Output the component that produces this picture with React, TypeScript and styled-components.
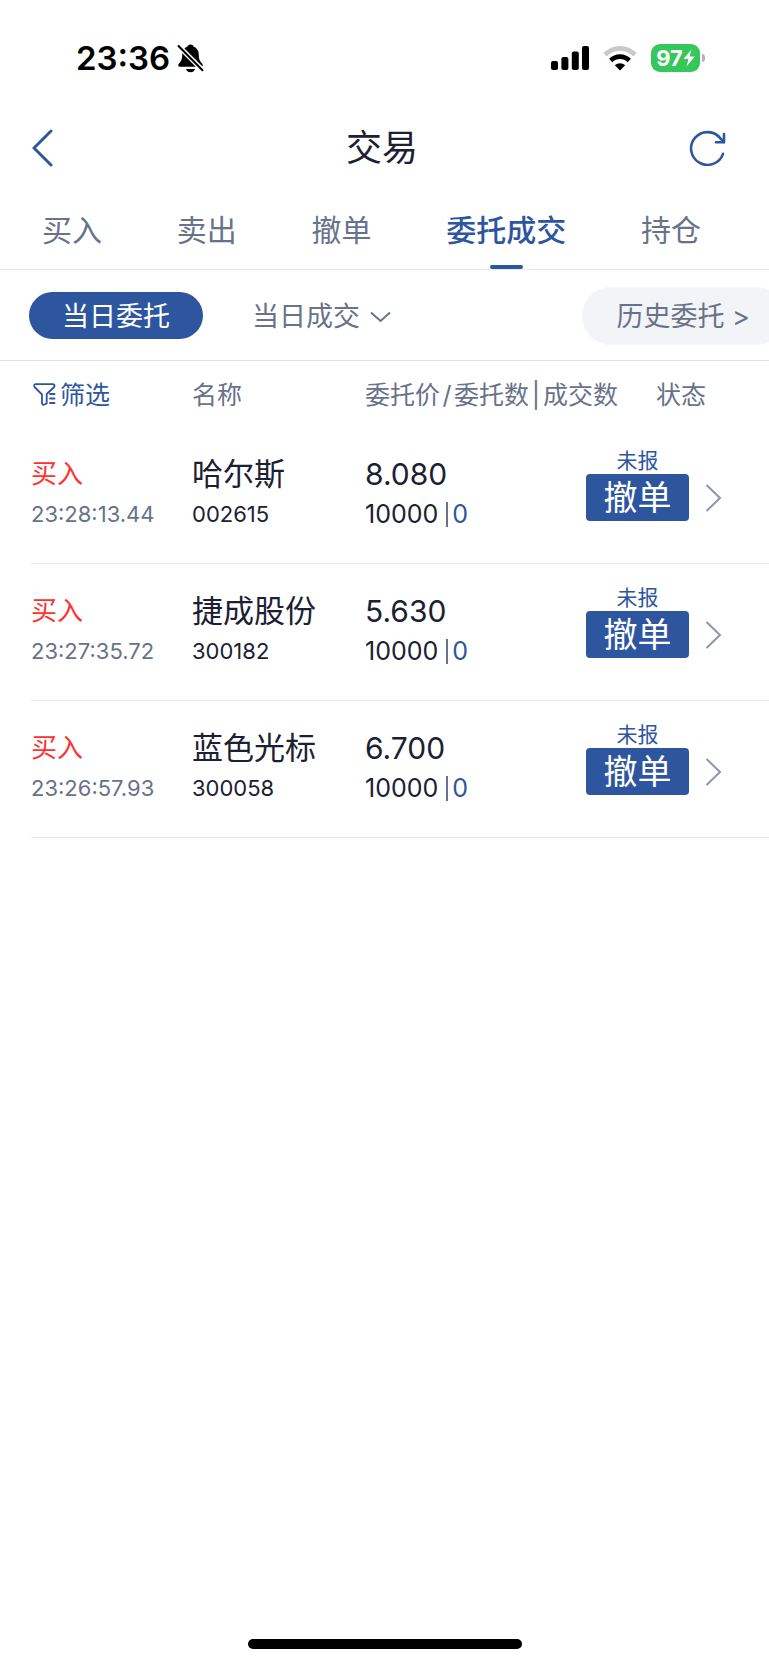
import React from 'react';
import styled, { createGlobalStyle } from 'styled-components';

const color = {
  blue: '#2e569f',
  ink: '#1b2132',
  slate: '#68728a',
  red: '#ff3030',
  line: '#e9eaee',
  pale: '#f3f4f7',
};

const GlobalStyle = createGlobalStyle`
  * { box-sizing: border-box; }
  body {
    margin: 0;
    background: #fff;
    color: ${color.ink};
    font-family: Inter, 'Noto Sans CJK SC', sans-serif;
  }
  button {
    margin: 0;
    padding: 0;
    border: 0;
    background: none;
    color: inherit;
    font: inherit;
    cursor: pointer;
  }
  svg { display: block; flex: none; }
`;

const Page = styled.div`
  display: flex;
  flex-direction: column;
  min-height: 100vh;
  overflow: hidden;
`;

const StatusBar = styled.div`
  display: flex;
  align-items: center;
  justify-content: space-between;
  height: 114px;
  padding: 2px 64px 0 76px;
  color: #000;
`;

const StatusGroup = styled.div<{ $gap: number }>`
  display: flex;
  align-items: center;
  gap: ${(p) => p.$gap}px;
`;

const Clock = styled.time`
  font-size: 33px;
  line-height: 40px;
  font-weight: 600;
`;

const Battery = styled.div`
  display: flex;
  align-items: center;
  gap: 2px;
`;

const BatteryBody = styled.div`
  display: flex;
  align-items: center;
  justify-content: center;
  width: 49px;
  height: 28px;
  border-radius: 9px;
  background: #35c759;
  color: #fff;
  font-size: 22px;
  line-height: 28px;
  font-weight: 700;
`;

const BatteryTip = styled.div`
  width: 3px;
  height: 8px;
  border-radius: 0 3px 3px 0;
  background: #b5b5b8;
`;

const TitleBar = styled.header`
  display: grid;
  grid-template-columns: 1fr auto 1fr;
  align-items: center;
  height: 68px;
  padding: 0 43px 0 38px;
`;

const Title = styled.h1`
  margin: 0;
  font-size: 36px;
  line-height: 48px;
  font-weight: 400;
`;

const IconButton = styled.button<{ $end?: boolean }>`
  justify-self: ${(p) => (p.$end ? 'end' : 'start')};
  margin-left: ${(p) => (p.$end ? 0 : -6)}px;
  color: ${color.blue};
`;

const Tabs = styled.nav`
  display: flex;
  justify-content: space-between;
  height: 88px;
  padding: 0 68px 0 42px;
  border-bottom: 1px solid ${color.line};
`;

const Tab = styled.button<{ $active?: boolean }>`
  display: flex;
  flex-direction: column;
  align-items: center;
  justify-content: space-between;
  padding-top: 26px;
  color: ${(p) => (p.$active ? color.blue : color.slate)};
  font-size: 30px;
  line-height: 44px;
  font-weight: ${(p) => (p.$active ? 500 : 400)};
  white-space: nowrap;

  &::after {
    content: '';
    width: 33px;
    height: 4px;
    border-radius: 2px;
    background: ${(p) => (p.$active ? color.blue : 'transparent')};
  }
`;

const FilterBar = styled.div`
  display: flex;
  align-items: center;
  height: 91px;
  padding: 1px 0 0 29px;
  border-bottom: 1px solid #dddfe6;
  color: ${color.slate};
  font-size: 27px;
  line-height: 40px;
  white-space: nowrap;
`;

const ActivePill = styled.button`
  height: 47px;
  padding: 2px 33px 0;
  border-radius: 24px;
  background: ${color.blue};
  color: #fff;
`;

const DropButton = styled.button`
  display: flex;
  align-items: center;
  gap: 10px;
  margin-left: 49px;
  padding-top: 2px;
`;

const HistoryPill = styled.button`
  height: 58px;
  margin-left: auto;
  margin-right: -16px;
  padding: 2px 35px 0;
  border-radius: 29px;
  background: ${color.pale};
`;

const TableArea = styled.main`
  flex: 1;
  padding-left: 31px;
`;

const Table = styled.table`
  width: 100%;
  table-layout: fixed;
  border-collapse: separate;
  border-spacing: 0;
`;

const HeadCell = styled.th<{ $width?: number; $indent?: number }>`
  width: ${(p) => (p.$width ? `${p.$width}px` : 'auto')};
  height: 66px;
  padding: 1px 0 0 ${(p) => p.$indent ?? 0}px;
  color: ${color.slate};
  font-size: 25px;
  line-height: 36px;
  font-weight: 400;
  text-align: left;
  white-space: nowrap;
`;

const FilterButton = styled.button`
  display: flex;
  align-items: center;
  gap: 4px;
  padding-left: 2px;
  color: ${color.blue};
`;

const Separator = styled.span`
  display: inline-block;
  width: 14px;
  text-align: center;
`;

const Cell = styled.td`
  padding: 26px 0 30px;
  border-bottom: 1px solid ${color.line};
  vertical-align: top;
  white-space: nowrap;
`;

const ActionCell = styled(Cell)`
  padding: 21px 0 0;
`;

const Line = styled.div<{ $size: number; $tall?: boolean; $color?: string }>`
  height: ${(p) => (p.$tall ? 42 : 38)}px;
  font-size: ${(p) => p.$size}px;
  line-height: ${(p) => (p.$tall ? 42 : 38)}px;
  color: ${(p) => p.$color ?? color.ink};
`;

const Quantity = styled(Line)`
  display: flex;
  align-items: center;
`;

const Filled = styled.span`
  margin-left: 8px;
  padding-left: 4px;
  border-left: 2px solid ${color.slate};
  color: ${color.blue};
  line-height: 25px;
`;

const Actions = styled.div`
  display: flex;
  align-items: flex-end;
  gap: 16px;
`;

const Stack = styled.div`
  display: flex;
  flex-direction: column;
  width: 103px;
  text-align: center;
`;

const State = styled.span`
  color: ${color.blue};
  font-size: 21px;
  line-height: 26px;
`;

const CancelButton = styled.button`
  height: 47px;
  border-radius: 4px;
  background: ${color.blue};
  color: #fff;
  font-size: 34px;
  line-height: 47px;
`;

const DetailButton = styled.button`
  display: flex;
  align-items: center;
  height: 47px;
`;

const HomeIndicator = styled.div`
  width: 36%;
  max-width: 274px;
  height: 10px;
  margin: 0 auto 16px;
  border-radius: 5px;
  background: #000;
`;

const BellOff = () => (
  <svg width="27" height="29" viewBox="0 0 27 29" aria-hidden="true">
    <path
      d="M13.500 0.500c-1.800 0-2.900 1-3.200 2.200C6.600 4 5.300 7 5.200 11c0 4-.8 6-3.200 8.500-1.200 1.300-1 3.300 1 3.300h21c2 0 2.200-2 1-3.300-2.400-2.500-3.200-4.500-3.200-8.500-.1-4-1.400-7-5.100-8.300C16.400 1.500 15.300.5 13.500.5z"
      fill="#000"
    />
    <path d="M9 25h9c-.5 2-2.300 3.300-4.500 3.300S9.500 27 9 25z" fill="#000" />
    <path d="M0 0.500L27 27.500" stroke="#fff" strokeWidth="5" />
    <path d="M1.500 2L25.500 26.200" stroke="#000" strokeWidth="2" strokeLinecap="round" />
  </svg>
);

const Signal = () => (
  <svg width="38" height="25" viewBox="0 0 38 25" aria-hidden="true">
    <rect x="0" y="15" width="7" height="9" rx="2" />
    <rect x="10.400" y="11" width="7" height="13" rx="2" />
    <rect x="20.800" y="5.500" width="7" height="18.500" rx="2" />
    <rect x="31" y="0" width="7" height="24" rx="2" />
  </svg>
);

const Wifi = () => (
  <svg width="34" height="25" viewBox="0 0 34 25" fill="none" aria-hidden="true">
    <path d="M2 8.800C10.500 0.300 23.500 0.300 32 8.800" stroke="#c9c9c9" strokeWidth="4.800" />
    <path d="M7.700 14.500C13 9.300 21 9.300 26.300 14.500" stroke="#000" strokeWidth="4.600" />
    <path d="M17 24.500L11.800 19.300C14.800 16.600 19.200 16.600 22.200 19.300z" fill="#000" />
  </svg>
);

const Bolt = () => (
  <svg width="12" height="18" viewBox="0 0 12 18" aria-hidden="true">
    <path d="M8.500 0.500L0.500 10h5L3.500 17.500 11.800 7.600H6.600z" fill="#fff" />
  </svg>
);

const BackIcon = () => (
  <svg width="21" height="38" viewBox="0 0 21 38" fill="none" aria-hidden="true">
    <path d="M19 2L2 19l17 17" stroke="currentColor" strokeWidth="3" strokeLinecap="round" strokeLinejoin="round" />
  </svg>
);

const RefreshIcon = () => (
  <svg width="37" height="36" viewBox="0 0 37 36" fill="none" stroke="currentColor" strokeWidth="2.600" aria-hidden="true">
    <path d="M34 23.800A16.400 16.400 0 1 1 31.500 8.500L34.800 12" strokeLinecap="round" />
    <path d="M35 4V12.200H27" strokeLinecap="round" strokeLinejoin="round" />
  </svg>
);

const DownIcon = () => (
  <svg width="21" height="12" viewBox="0 0 21 12" fill="none" aria-hidden="true">
    <path d="M1 1.500l9.500 8.500L20 1.500" stroke="currentColor" strokeWidth="2" />
  </svg>
);

const FunnelIcon = () => (
  <svg width="23" height="23" viewBox="0 0 23 23" fill="none" stroke="currentColor" strokeWidth="1.800" strokeLinejoin="round" strokeLinecap="round" aria-hidden="true">
    <path d="M13.500 20.500L11 21.700Q9.500 22 9 20.500V11.500L1.500 4Q0.500 1.500 2.500 1.200H20Q22.300 1.500 21.200 4L13.700 11V20.500" />
    <path d="M17 11h4.500M17 15.500h4.500M17 20h4.500" />
  </svg>
);

const RightIcon = () => (
  <svg width="17" height="28" viewBox="0 0 17 28" fill="none" aria-hidden="true">
    <path d="M1.500 1L15 14 1.500 27" stroke="#8d96a8" strokeWidth="2" />
  </svg>
);

const tabs = ['买入', '卖出', '撤单', '委托成交', '持仓'];

const orders = [
  { time: '23:28:13.44', name: '哈尔斯', code: '002615', price: '8.080', quantity: 10000, filled: 0 },
  { time: '23:27:35.72', name: '捷成股份', code: '300182', price: '5.630', quantity: 10000, filled: 0 },
  { time: '23:26:57.93', name: '蓝色光标', code: '300058', price: '6.700', quantity: 10000, filled: 0 },
];

export default function App() {
  return (
    <>
      <GlobalStyle />
      <Page>
        <StatusBar>
          <StatusGroup $gap={7}>
            <Clock>23:36</Clock>
            <BellOff />
          </StatusGroup>
          <StatusGroup $gap={14}>
            <Signal />
            <Wifi />
            <Battery>
              <BatteryBody>
                97
                <Bolt />
              </BatteryBody>
              <BatteryTip />
            </Battery>
          </StatusGroup>
        </StatusBar>

        <TitleBar>
          <IconButton aria-label="返回">
            <BackIcon />
          </IconButton>
          <Title>交易</Title>
          <IconButton $end aria-label="刷新">
            <RefreshIcon />
          </IconButton>
        </TitleBar>

        <Tabs>
          {tabs.map((label) => (
            <Tab key={label} $active={label === '委托成交'}>
              {label}
            </Tab>
          ))}
        </Tabs>

        <FilterBar>
          <ActivePill>当日委托</ActivePill>
          <DropButton>
            当日成交
            <DownIcon />
          </DropButton>
          <HistoryPill>历史委托 &gt;</HistoryPill>
        </FilterBar>

        <TableArea>
          <Table>
            <thead>
              <tr>
                <HeadCell $width={161}>
                  <FilterButton>
                    <FunnelIcon />
                    筛选
                  </FilterButton>
                </HeadCell>
                <HeadCell $width={173}>名称</HeadCell>
                <HeadCell>
                  委托价<Separator>/</Separator>委托数<Separator>|</Separator>成交数
                </HeadCell>
                <HeadCell $width={183} $indent={70}>状态</HeadCell>
              </tr>
            </thead>
            <tbody>
              {orders.map((order) => (
                <tr key={order.code}>
                  <Cell>
                    <Line $size={26} $tall $color={color.red}>买入</Line>
                    <Line $size={22} $color={color.slate}>{order.time}</Line>
                  </Cell>
                  <Cell>
                    <Line $size={31} $tall>{order.name}</Line>
                    <Line $size={22}>{order.code}</Line>
                  </Cell>
                  <Cell>
                    <Line $size={30} $tall>{order.price}</Line>
                    <Quantity $size={25}>
                      {order.quantity}
                      <Filled>{order.filled}</Filled>
                    </Quantity>
                  </Cell>
                  <ActionCell>
                    <Actions>
                      <Stack>
                        <State>未报</State>
                        <CancelButton>撤单</CancelButton>
                      </Stack>
                      <DetailButton aria-label="查看详情">
                        <RightIcon />
                      </DetailButton>
                    </Actions>
                  </ActionCell>
                </tr>
              ))}
            </tbody>
          </Table>
        </TableArea>

        <HomeIndicator />
      </Page>
    </>
  );
}
